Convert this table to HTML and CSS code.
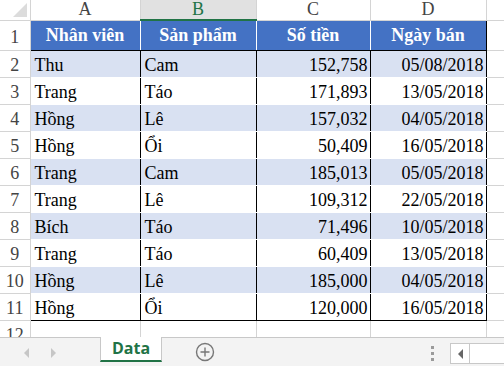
FILE: index.html
```
<!DOCTYPE html>
<html lang="vi">

<head>
    <meta charset="UTF-8">
    <meta name="viewport" content="width=device-width, initial-scale=1.0">
    <title>Data</title>
    <link rel="stylesheet" href="styles.css">
</head>

<body>
    <div class="sheet">
        <table class="grid">
            <colgroup>
                <col class="c-row">
                <col class="c-a">
                <col class="c-b">
                <col class="c-c">
                <col class="c-d">
                <col class="c-e">
            </colgroup>
            <thead>
                <tr class="letters">
                    <th class="corner"><span class="tri"></span></th>
                    <th>A</th>
                    <th class="sel">B</th>
                    <th>C</th>
                    <th>D</th>
                    <th></th>
                </tr>
            </thead>
            <tbody>
                <tr class="head">
                    <td class="rn">1</td>
                    <td class="h first">Nhân viên</td>
                    <td class="h">Sản phẩm</td>
                    <td class="h">Số tiền</td>
                    <td class="h last">Ngày bán</td>
                    <td></td>
                </tr>
                <tr class="band">
                    <td class="rn">2</td><td class="t first">Thu</td><td class="t">Cam</td><td class="t num">152,758</td><td class="t num last">05/08/2018</td><td></td>
                </tr>
                <tr>
                    <td class="rn">3</td><td class="t first">Trang</td><td class="t">Táo</td><td class="t num">171,893</td><td class="t num last">13/05/2018</td><td></td>
                </tr>
                <tr class="band">
                    <td class="rn">4</td><td class="t first">Hồng</td><td class="t">Lê</td><td class="t num">157,032</td><td class="t num last">04/05/2018</td><td></td>
                </tr>
                <tr>
                    <td class="rn">5</td><td class="t first">Hồng</td><td class="t">Ổi</td><td class="t num">50,409</td><td class="t num last">16/05/2018</td><td></td>
                </tr>
                <tr class="band">
                    <td class="rn">6</td><td class="t first">Trang</td><td class="t">Cam</td><td class="t num">185,013</td><td class="t num last">05/05/2018</td><td></td>
                </tr>
                <tr>
                    <td class="rn">7</td><td class="t first">Trang</td><td class="t">Lê</td><td class="t num">109,312</td><td class="t num last">22/05/2018</td><td></td>
                </tr>
                <tr class="band">
                    <td class="rn">8</td><td class="t first">Bích</td><td class="t">Táo</td><td class="t num">71,496</td><td class="t num last">10/05/2018</td><td></td>
                </tr>
                <tr>
                    <td class="rn">9</td><td class="t first">Trang</td><td class="t">Táo</td><td class="t num">60,409</td><td class="t num last">13/05/2018</td><td></td>
                </tr>
                <tr class="band">
                    <td class="rn">10</td><td class="t first">Hồng</td><td class="t">Lê</td><td class="t num">185,000</td><td class="t num last">04/05/2018</td><td></td>
                </tr>
                <tr class="end">
                    <td class="rn">11</td><td class="t first">Hồng</td><td class="t">Ổi</td><td class="t num">120,000</td><td class="t num last">16/05/2018</td><td></td>
                </tr>
                <tr class="cut">
                    <td class="rn">12</td><td></td><td></td><td></td><td></td><td></td>
                </tr>
            </tbody>
        </table>
    </div>

    <div class="tabs">
        <div class="nav">
            <span class="arrow left"></span>
            <span class="arrow right"></span>
        </div>
        <div class="tab">Data</div>
        <div class="add">
            <svg width="20" height="20" viewBox="0 0 20 20">
                <circle cx="10" cy="10" r="8.5" fill="none" stroke="#777" stroke-width="1.4"/>
                <path d="M10 5.5v9M5.5 10h9" stroke="#777" stroke-width="1.4"/>
            </svg>
        </div>
        <div class="spacer"></div>
        <div class="dots"><i></i><i></i><i></i></div>
        <div class="scroll">
            <span class="sbtn"><span class="sarrow"></span></span>
        </div>
    </div>
</body>

</html>
```

FILE: styles.css
```
body {
    margin: 0;
    width: 504px;
    height: 366px;
    overflow: hidden;
    background-color: #fff;
    font-family: 'Liberation Serif', 'Times New Roman', serif;
}

.sheet {
    height: 337px;
    overflow: hidden;
}

.grid {
    border-collapse: collapse;
    table-layout: fixed;
    width: 504px;
}

.c-row { width: 30px; }
.c-a { width: 110px; }
.c-b { width: 116px; }
.c-c { width: 114px; }
.c-d { width: 116px; }
.c-e { width: 18px; }

td,
th {
    padding: 0;
    border: 1px solid #d4d4d4;
    font-size: 18px;
    white-space: nowrap;
    overflow: hidden;
}

.letters th {
    height: 19px;
    font-weight: normal;
    color: #444;
    text-align: center;
    font-size: 18px;
    line-height: 19px;
    border-top: none;
}

.letters th.sel {
    background-color: #e1e1e1;
    color: #217346;
    border-bottom: 2px solid #217346;
}

.corner {
    position: relative;
    border-left: none;
}

.tri {
    position: absolute;
    right: 3px;
    bottom: 3px;
    width: 0;
    height: 0;
    border-left: 14px solid transparent;
    border-bottom: 14px solid #dcdcdc;
}

.rn {
    text-align: center;
    color: #444;
    font-size: 18px;
    border-left: none;
    padding-top: 4px;
}

tr.head td {
    height: 25px;
}

tbody tr td {
    height: 22px;
}

.h {
    background-color: #4472c4;
    color: #fff;
    font-weight: bold;
    text-align: center;
    border: 1px solid #fff;
    border-top: 1px solid #4472c4;
    border-bottom: 1px solid #000;
}

.h.first {
    border-left: 1px solid #000;
}

.h.last {
    border-right: 1px solid #000;
}

.t {
    color: #000;
    padding: 4px 2px 0 4px;
    border-left: 1px solid #000;
    border-right: 1px solid #000;
    border-top: 1px solid #fff;
    border-bottom: 1px solid #fff;
}

.band .t {
    background-color: #d9e1f2;
}

.end .t {
    border-bottom: 1px solid #000;
}

.num {
    text-align: right;
}

tr.cut td {
    height: 14px;
}

.tabs {
    height: 29px;
    display: flex;
    align-items: flex-start;
    background-color: #f3f3f3;
    border-top: 1px solid #c8c8c8;
    box-sizing: border-box;
}

.nav {
    width: 100px;
    display: flex;
    gap: 22px;
    padding: 10px 0 0 24px;
    box-sizing: border-box;
}

.arrow {
    width: 0;
    height: 0;
    border-top: 5px solid transparent;
    border-bottom: 5px solid transparent;
}

.arrow.left {
    border-right: 5px solid #c6c6c6;
}

.arrow.right {
    border-left: 5px solid #c6c6c6;
}

.tab {
    width: 62px;
    height: 25px;
    margin-top: -1px;
    box-sizing: border-box;
    background-color: #fff;
    border-left: 1px solid #c8c8c8;
    border-right: 1px solid #c8c8c8;
    border-bottom: 2px solid #217346;
    color: #217346;
    font-family: 'Open Sans', 'DejaVu Sans', sans-serif;
    font-weight: bold;
    font-size: 16px;
    line-height: 23px;
    text-align: center;
}

.add {
    margin: 4px 0 0 33px;
    height: 20px;
}

.spacer {
    flex: 1;
}

.dots {
    display: flex;
    flex-direction: column;
    gap: 3px;
    padding-top: 8px;
    margin-right: 16px;
}

.dots i {
    width: 3px;
    height: 3px;
    background-color: #9a9a9a;
}

.scroll {
    width: 54px;
    height: 21px;
    margin-top: 5px;
    background-color: #fff;
    border: 1px solid #c8c8c8;
    border-right: none;
    box-sizing: border-box;
}

.sbtn {
    display: flex;
    align-items: center;
    justify-content: center;
    width: 18px;
    height: 19px;
    border-right: 1px solid #c8c8c8;
}

.sarrow {
    width: 0;
    height: 0;
    border-top: 5px solid transparent;
    border-bottom: 5px solid transparent;
    border-right: 5px solid #666;
}
```
